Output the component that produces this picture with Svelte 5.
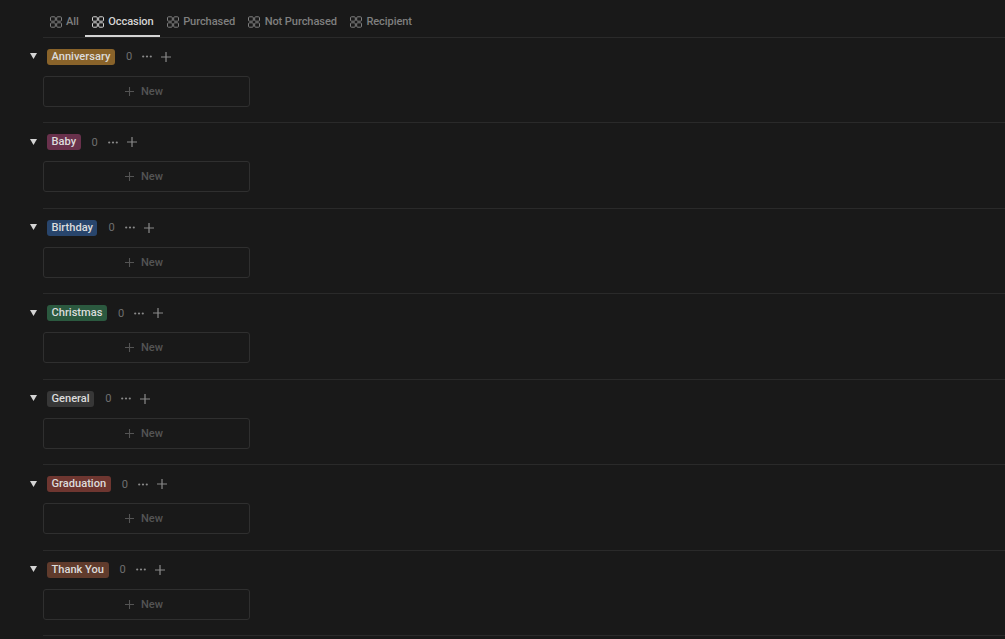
<script>
    const tabs = ["All", "Occasion", "Purchased", "Not Purchased", "Recipient"]
    const groups = [
        { name: "Anniversary", color: "#89632a" },
        { name: "Baby", color: "#69314c" },
        { name: "Birthday", color: "#28456c" },
        { name: "Christmas", color: "#2b593f" },
        { name: "General", color: "#373737" },
        { name: "Graduation", color: "#6e3630" },
        { name: "Thank You", color: "#603b2c" }
    ]
</script>

<div class="page">
    <div class="tabs">
        {#each tabs as tab}
            <div class="tab" class:active={tab === "Occasion"}>
                <svg class="tab-icon" viewBox="0 0 12 12" width="12" height="12" fill="none" stroke="currentColor" stroke-width="1">
                    <rect x="0.5" y="0.8" width="4.8" height="4.4" rx="1" />
                    <rect x="6.7" y="0.8" width="4.8" height="4.4" rx="1" />
                    <rect x="0.5" y="6.8" width="4.8" height="4.4" rx="1" />
                    <rect x="6.7" y="6.8" width="4.8" height="4.4" rx="1" />
                </svg>
                <span>{tab}</span>
            </div>
        {/each}
    </div>

    {#each groups as group}
        <section class="group">
            <div class="group-head">
                <svg class="caret" viewBox="0 0 7 6" width="7" height="6">
                    <path d="M0 0H7L3.5 6Z" fill="#d4d4d4" />
                </svg>
                <span class="pill" style="background: {group.color}">{group.name}</span>
                <span class="count">0</span>
                <svg class="dots" viewBox="0 0 10 3" width="10" height="3">
                    <circle cx="1.2" cy="1.5" r="1.1" />
                    <circle cx="5" cy="1.5" r="1.1" />
                    <circle cx="8.8" cy="1.5" r="1.1" />
                </svg>
                <svg class="plus" viewBox="0 0 10 10" width="10" height="10">
                    <path d="M5 0V10M0 5H10" />
                </svg>
            </div>
            <div class="card">
                <svg class="card-plus" viewBox="0 0 10 10" width="9" height="9">
                    <path d="M5 0V10M0 5H10" />
                </svg>
                <span>New</span>
            </div>
        </section>
    {/each}
</div>

<style>
    :global(body) {
        background: #191919;
        overflow: hidden;
    }

    .page {
        height: 639px;
        overflow: hidden;
        background: #191919;
        padding-left: 30px;
        font-family: Roboto, sans-serif;
        font-size: 11.1px;
    }

    .tabs {
        display: flex;
        height: 36.5px;
        margin-left: 13px;
        border-bottom: 1px solid #2a2a2a;
    }

    .tab {
        display: flex;
        align-items: center;
        gap: 4.5px;
        padding: 8px 6.5px 0;
        height: 27px;
        color: #7f7f7f;
        font-weight: 500;
        letter-spacing: -0.1px;
        border-bottom: 2px solid transparent;
    }

    .tab.active {
        color: #d4d4d4;
        border-bottom-color: #d4d4d4;
    }

    .tab-icon {
        flex: none;
    }

    .group {
        height: 84.5px;
        border-bottom: 1px solid #2a2a2a;
        margin-left: 13px;
    }

    .group-head {
        display: flex;
        align-items: center;
        height: 38px;
        margin-left: -13px;
    }

    .caret {
        margin-right: 10px;
        margin-top: -1px;
        flex: none;
    }

    .pill {
        height: 16px;
        line-height: 16px;
        padding: 0 4.5px;
        border-radius: 3px;
        color: #dcdcdc;
        font-weight: 500;
        margin-right: 11px;
    }

    .count {
        color: #6f6f6f;
        margin-right: 10px;
    }

    .dots {
        fill: #8a8a8a;
        margin-right: 9px;
    }

    .plus {
        stroke: #8a8a8a;
        stroke-width: 1.2;
        fill: none;
    }

    .card {
        display: flex;
        align-items: center;
        justify-content: center;
        gap: 7px;
        width: 200px;
        height: 29px;
        padding-right: 5px;
        border: 1px solid #2f2f2f;
        border-radius: 3px;
        color: #545454;
        font-weight: 500;
    }

    .card-plus {
        stroke: #545454;
        stroke-width: 1.2;
        fill: none;
    }
</style>
